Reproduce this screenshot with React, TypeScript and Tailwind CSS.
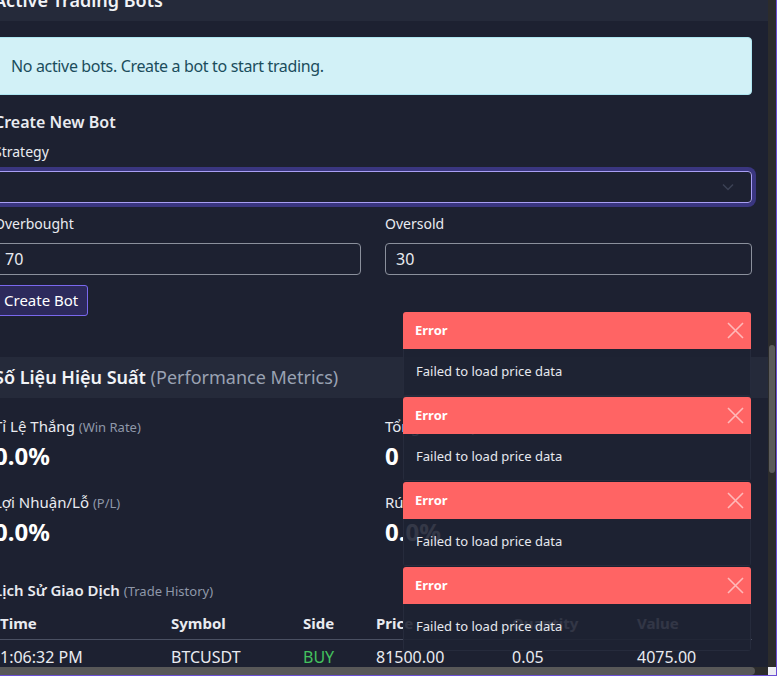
import { type ReactNode } from "react";

const METRICS = [
  { label: "Tỉ Lệ Thắng", sub: "(Win Rate)", value: "0.0%" },
  { label: "Tổng Giao Dịch", sub: "(Total Trades)", value: "0" },
  { label: "Lợi Nhuận/Lỗ", sub: "(P/L)", value: "0.0%" },
  { label: "Rút Vốn Tối Đa", sub: "(Max Drawdown)", value: "0.0%" },
];

const COLUMNS = ["Time", "Symbol", "Side", "Price", "Quantity", "Value"];

const TRADES = [
  { time: "1:06:32 PM", symbol: "BTCUSDT", side: "BUY", price: "81500.00", qty: "0.05", value: "4075.00" },
];

function CardHeader({ children, className }: { children: ReactNode; className: string }) {
  return (
    <div className={`flex items-center bg-[#252a3a] px-4 text-[18px] font-semibold text-[#f1f3f7] ${className}`}>
      {children}
    </div>
  );
}

function ChevronDown() {
  return (
    <svg width="12" height="8" viewBox="0 0 12 8" fill="none" stroke="#3b4154" strokeWidth="1.5">
      <path d="M1 1.5l5 5 5-5" />
    </svg>
  );
}

function CloseIcon() {
  return (
    <svg width="17" height="17" viewBox="0 0 17 17" stroke="rgba(255,255,255,0.55)" strokeWidth="1.6">
      <path d="M1 1l15 15M16 1L1 16" />
    </svg>
  );
}

function Toast() {
  return (
    <div className="overflow-hidden rounded-[3px]">
      <div className="flex h-[37px] items-center justify-between bg-[#ff6464] pl-3 pr-[7px]">
        <span className="text-[13px] font-bold text-white">Error</span>
        <CloseIcon />
      </div>
      <div className="flex h-[47px] items-center border-x border-b border-[#262b3c] bg-[#1e2233]/90 px-3 text-[13px] text-[#e6e8ee]">
        Failed to load price data
      </div>
    </div>
  );
}

export default function App() {
  return (
    <div className="relative h-[676px] w-[777px] overflow-hidden border-r border-b border-[#6a4fd4] bg-[#1d2131] font-['Noto_Sans',sans-serif] text-[#e9ebf0]">
      <div className="flex h-[675px] w-[776px] flex-col">
        <div className="flex h-[667px]">
          <div className="min-w-0 flex-1 overflow-hidden">
            <div className="ml-[-22px] mt-[-21px] w-[790px]">
              {/* bots card */}
              <CardHeader className="h-[42px]">Active Trading Bots</CardHeader>
              <div className="p-4">
                <div className="flex h-[58px] items-center rounded border border-[#aee6f1] bg-[#d2f1f7] px-4 text-[16px] tracking-[-0.35px] text-[#1b4d5c]">
                  No active bots. Create a bot to start trading.
                </div>
                <div className="mt-[17px] text-[16px] font-semibold leading-[20px]">Create New Bot</div>
                <div className="mt-[10px] text-[14px] leading-[20px]">Strategy</div>
                <div className="mt-[9px] flex h-[32px] items-center justify-end rounded border border-[#a99ff3] pr-[17px] ring-4 ring-[#3a3680]">
                  <ChevronDown />
                </div>
                <div className="mt-[11px] grid grid-cols-2 gap-6">
                  {[
                    ["Overbought", "70"],
                    ["Oversold", "30"],
                  ].map(([label, val]) => (
                    <div key={label}>
                      <div className="text-[14px] leading-[20px]">{label}</div>
                      <div className="mt-[9px] flex h-[32px] items-center rounded border border-[#8b909c] px-[10px] text-[16px]">
                        {val}
                      </div>
                    </div>
                  ))}
                </div>
                <button className="mt-[10px] flex h-[31px] items-center rounded-[3px] border border-[#7a68ee] bg-[#2d2a5c] px-[9px] text-[15px] text-white">
                  Create Bot
                </button>
              </div>

              {/* metrics card */}
              <CardHeader className="mt-[25px] h-[41px]">
                Số Liệu Hiệu Suất&nbsp;<span className="font-normal text-[#9aa2b3]">(Performance Metrics)</span>
              </CardHeader>
              <div className="p-4">
                <div className="grid grid-cols-2 gap-x-6 gap-y-[19px]">
                  {METRICS.map((m) => (
                    <div key={m.label}>
                      <div className="text-[15px] leading-[24px]">
                        {m.label} <span className="text-[13px] text-[#8f98a9]">{m.sub}</span>
                      </div>
                      <div className="mt-[2px] text-[24px] font-bold leading-[30px] text-white">{m.value}</div>
                    </div>
                  ))}
                </div>
                <div className="mt-[31px] text-[15px] font-semibold leading-[24px]">
                  Lịch Sử Giao Dịch <span className="text-[13px] font-normal text-[#8f98a9]">(Trade History)</span>
                </div>
                <div className="mt-[4px]">
                  <div className="grid h-[33px] grid-cols-[171px_132px_73px_136px_125px_1fr] items-center border-b border-[#4a5062] text-[15px] font-bold">
                    {COLUMNS.map((c) => (
                      <div key={c} className="px-[6px]">
                        {c}
                      </div>
                    ))}
                  </div>
                  {TRADES.map((t) => (
                    <div
                      key={t.time}
                      className="grid h-[33px] grid-cols-[171px_132px_73px_136px_125px_1fr] items-center text-[16px]"
                    >
                      <div className="px-[6px]">{t.time}</div>
                      <div className="px-[6px]">{t.symbol}</div>
                      <div className="px-[6px] text-[#44c25e]">{t.side}</div>
                      <div className="px-[6px]">{t.price}</div>
                      <div className="px-[6px]">{t.qty}</div>
                      <div className="px-[6px]">{t.value}</div>
                    </div>
                  ))}
                </div>
              </div>
            </div>
          </div>
          {/* vertical scrollbar */}
          <div className="flex w-[8px] flex-col bg-[#2c2c2c]">
            <div className="h-[345px]" />
            <div className="ml-[1px] h-[128px] w-[6px] rounded-full bg-[#5b5b5b]" />
          </div>
        </div>
        {/* horizontal scrollbar */}
        <div className="flex h-[8px] bg-[#2c2c2c]">
          <div className="w-[755px] rounded-r-full bg-[#585858]" />
          <div className="flex-1" />
          <div className="w-[8px] bg-[#ececf2]" />
        </div>
      </div>

      {/* toast stack */}
      <div className="absolute left-[403px] top-[312px] flex w-[348px] flex-col gap-[1px]">
        <Toast />
        <Toast />
        <Toast />
        <Toast />
      </div>
    </div>
  );
}
